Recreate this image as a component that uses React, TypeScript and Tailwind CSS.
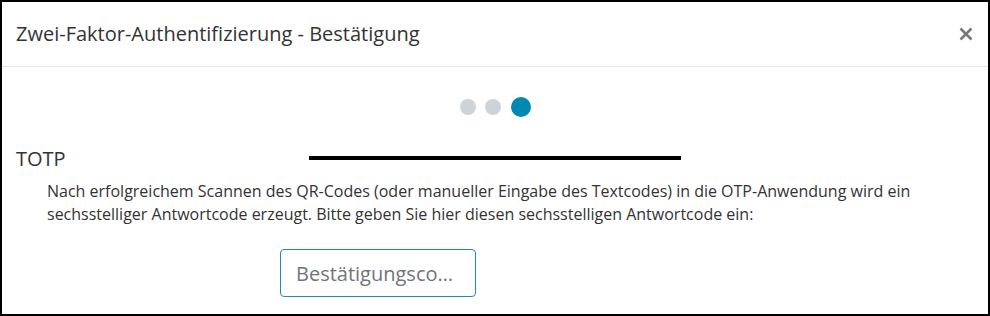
import React from "react";

export default function App() {
  return (
    <div
      className="w-[990px] h-[316px] border-2 border-black bg-white overflow-hidden text-[#333333]"
      style={{ fontFamily: '"Open Sans", "Noto Sans", sans-serif' }}
    >
      <div className="h-[65px] border-b border-[#e4e4ee] flex items-center justify-between pl-[14px] pr-[14px]">
        <h1 className="text-[20px] leading-[28px] text-[#333333]">Zwei-Faktor-Authentifizierung - Bestätigung</h1>
        <button className="w-[16px] h-[16px] flex items-center justify-center" aria-label="Schließen">
          <svg width="14" height="14" viewBox="0 0 14 14">
            <path d="M1.5 1.5 L12.5 12.5 M12.5 1.5 L1.5 12.5" stroke="#777777" strokeWidth="2.6" strokeLinecap="butt" />
          </svg>
        </button>
      </div>
      <div className="pt-[30px]">
        <div className="flex items-center justify-center gap-[9px]">
          <span className="w-[16px] h-[16px] rounded-full bg-[#cdd4d8]" />
          <span className="w-[16px] h-[16px] rounded-full bg-[#cdd4d8] mr-[1px]" />
          <span className="w-[20px] h-[20px] rounded-full bg-[#0088b2]" />
        </div>
        <div className="grid grid-cols-[1fr_372px_1fr] mt-[28px]">
          <h2 className="pl-[14px] text-[20px] leading-[28px] text-[#333333]">TOTP</h2>
          <div className="h-[4px] bg-black mt-[11px]" />
          <div />
        </div>
        <p className="mt-[7px] pl-[45px] pr-[50px] text-[16px] leading-[23px] text-[#333333]">
          Nach erfolgreichem Scannen des QR-Codes (oder manueller Eingabe des Textcodes) in die OTP-Anwendung wird ein sechsstelliger Antwortcode erzeugt. Bitte geben Sie hier diesen sechsstelligen Antwortcode ein:
        </p>
        <div className="mt-[23px] pl-[278px]">
          <input
            type="text"
            placeholder="Bestätigungscode"
            className="w-[196px] h-[48px] border border-[#1b8db5] rounded-[4px] pl-[15px] pr-[21px] text-[20px] text-[#333333] placeholder:text-[#6f757b] text-ellipsis outline-none bg-white"
          />
        </div>
      </div>
    </div>
  );
}
